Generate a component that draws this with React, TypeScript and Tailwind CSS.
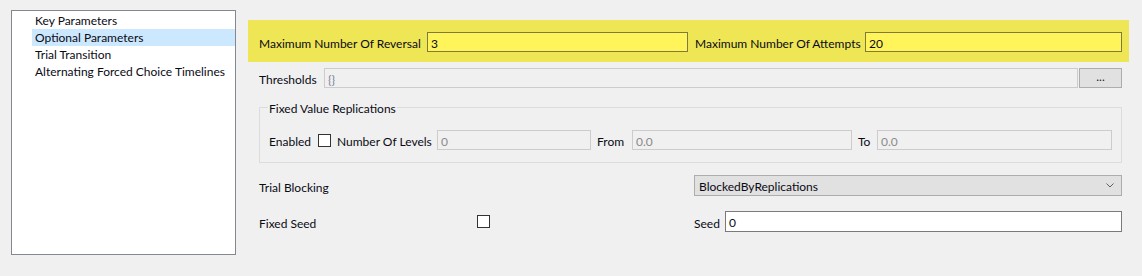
import React from "react";

const font = { fontFamily: "Lato, 'Noto Sans', sans-serif" };

function Checkbox() {
  return <div className="w-[13px] h-[13px] border border-[#333333] bg-white shrink-0" />;
}

function DisabledInput({ value, className }: { value: string; className: string }) {
  return (
    <div className={`h-[20px] shrink-0 border border-[#cccccc] bg-[#f0f0f0] text-[#8a8a8a] flex items-center pl-[3px] pt-[3px] ${className}`}>
      {value}
    </div>
  );
}

export default function App() {
  return (
    <div className="w-[1142px] h-[276px] bg-[#f0f0f0] flex text-[12px] text-[#0a0a14] leading-none whitespace-nowrap" style={font}>
      <div className="ml-[11px] mt-[10px] w-[225px] h-[245px] border border-[#828790] bg-white pt-[1px] shrink-0">
        {["Key Parameters", "Optional Parameters", "Trial Transition", "Alternating Forced Choice Timelines"].map((t, i) => (
          <div key={t} className={`h-[17px] flex items-center ml-[20px] pl-[3px] pt-[1px] ${i === 1 ? "bg-[#cce8ff]" : ""}`}>
            {t}
          </div>
        ))}
      </div>
      <div className="ml-[12px] w-[881px] flex flex-col shrink-0">
        <div className="mt-[20px] h-[42px] bg-[#efe655] flex items-center pl-[11px] pt-[2px]">
          <span className="w-[168px] shrink-0 pt-[3px]">Maximum Number Of Reversal</span>
          <div className="w-[261px] shrink-0 h-[20px] border border-[#7f7b3e] bg-[#fff45a] flex items-center pl-[3px] pt-[3px]">3</div>
          <span className="ml-[7px] w-[170px] shrink-0 pt-[3px]">Maximum Number Of Attempts</span>
          <div className="w-[257px] shrink-0 h-[20px] border border-[#7f7b3e] bg-[#fff45a] flex items-center pl-[3px] pt-[3px]">20</div>
        </div>
        <div className="mt-[6px] h-[20px] flex items-center pl-[11px]">
          <span className="w-[65px] shrink-0 pt-[4px]">Thresholds</span>
          <div className="w-[754px] shrink-0 h-[20px] border border-[#cccccc] bg-[#f0f0f0] text-[#7b8099] flex items-center pl-[3px] pt-[3px]">{"{}"}</div>
          <div className="ml-[1px] w-[43px] shrink-0 h-[20px] border border-[#adadad] bg-[#e1e1e1] flex items-center justify-center text-[#222] pb-[2px]">...</div>
        </div>
        <div className="mt-[19px] ml-[11px] w-[863px] h-[56px] border border-[#dcdcdc] relative">
          <span className="absolute left-[8px] top-[-6px] bg-[#f0f0f0] px-[1px] pt-[1px]">Fixed Value Replications</span>
          <div className="mt-[22px] ml-[9px] h-[20px] flex items-center">
            <span className="w-[49px] shrink-0 pt-[4px]">Enabled</span>
            <Checkbox />
            <span className="ml-[6px] w-[100px] shrink-0 pt-[4px]">Number Of Levels</span>
            <DisabledInput value="0" className="w-[154px]" />
            <span className="ml-[6px] w-[35px] shrink-0 pt-[4px]">From</span>
            <DisabledInput value="0.0" className="w-[220px]" />
            <span className="ml-[6px] w-[19px] shrink-0 pt-[4px]">To</span>
            <DisabledInput value="0.0" className="w-[235px]" />
          </div>
        </div>
        <div className="mt-[12px] h-[21px] flex items-center pl-[11px]">
          <span className="w-[435px] shrink-0 pt-[4px]">Trial Blocking</span>
          <div className="w-[428px] shrink-0 h-[21px] border border-[#adadad] bg-[#e1e1e1] flex items-center pl-[4px] justify-between pr-[7px]">
            <span className="pt-[3px]">BlockedByReplications</span>
            <svg width="8" height="5" viewBox="0 0 8 5" fill="none">
              <path d="M0.5 0.5 L4 4 L7.5 0.5" stroke="#606060" strokeWidth="1" />
            </svg>
          </div>
        </div>
        <div className="mt-[15px] h-[21px] flex items-center pl-[11px]">
          <span className="w-[218px] shrink-0 pt-[4px]">Fixed Seed</span>
          <Checkbox />
          <span className="ml-[204px] w-[31px] shrink-0 pt-[4px]">Seed</span>
          <div className="w-[397px] shrink-0 h-[21px] border border-[#7a7a7a] bg-white flex items-center pl-[3px] pt-[3px]">0</div>
        </div>
      </div>
    </div>
  );
}
